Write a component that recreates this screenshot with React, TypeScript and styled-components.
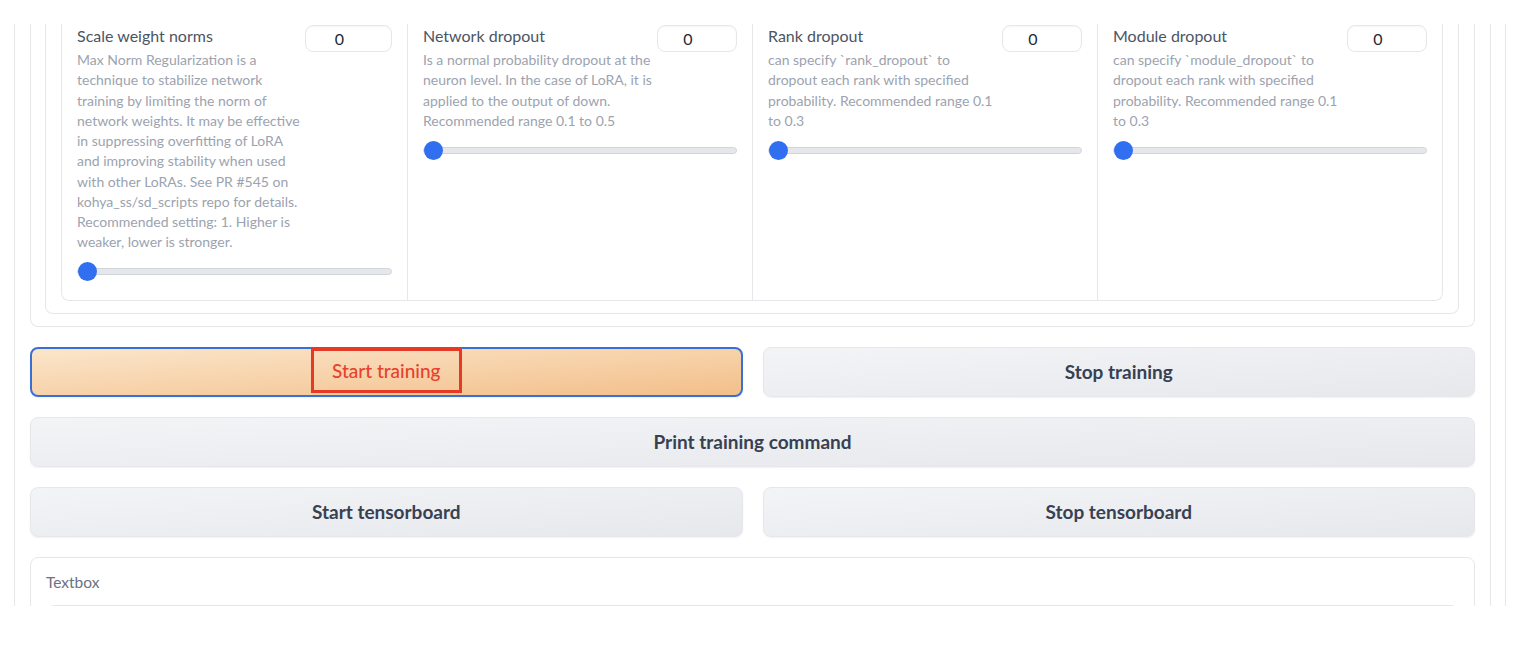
import styled, { createGlobalStyle } from 'styled-components';

const GlobalStyle = createGlobalStyle`
    body {
        margin: 0;
        background: #fff;
        font-family: Lato, "Liberation Sans", sans-serif;
    }
`

const Page = styled.div`
    padding: 24px 0 0 14px;
`

const Frame = styled.div`
    width: 1490px;
    height: 582px;
    overflow: hidden;
    border-left: 1px solid #e5e7eb;
    border-right: 1px solid #e5e7eb;
`

const Panel = styled.div`
    width: 1445px;
    min-height: 100%;
    padding: 0 15px;
    border-right: 1px solid #e5e7eb;
    display: flex;
    flex-direction: column;
    gap: 20px;
`

const OpenCard = styled.div<{ $pad: string }>`
    border: 1px solid #e5e7eb;
    border-top: none;
    border-radius: 0 0 8px 8px;
    padding: ${p => p.$pad};
    background: #fff;
`

const ParamGrid = styled.div`
    display: grid;
    grid-template-columns: repeat(4, 1fr);
    border: 1px solid #e5e7eb;
    border-top: none;
    border-radius: 0 0 8px 8px;
`

const Column = styled.div<{ $first?: boolean }>`
    padding: 1px 15px 18px;
    border-left: ${p => (p.$first ? 'none' : '1px solid #e5e7eb')};
    display: flex;
    flex-direction: column;
`

const HeaderRow = styled.div`
    display: flex;
    align-items: flex-start;
    gap: 5px;
`

const LabelBlock = styled.div`
    flex: 1;
    min-width: 0;
`

const Title = styled.div`
    font-size: 16px;
    line-height: 22px;
    color: #4b5563;
`

const Info = styled.div`
    margin-top: 3px;
    font-size: 14px;
    line-height: 20.25px;
    color: #9ca3af;
`

const NumberBox = styled.input<{ $w: number }>`
    flex: none;
    box-sizing: border-box;
    width: ${p => p.$w}px;
    height: 27px;
    border: 1px solid #e5e7eb;
    border-radius: 8px;
    box-shadow: inset 0 1px 2px rgba(0, 0, 0, 0.04);
    padding: 0 18px 0 0;
    text-align: center;
    font-family: inherit;
    font-size: 16px;
    color: #1f2937;
    background: #fff;
    outline: none;
    -moz-appearance: textfield;
    &::-webkit-inner-spin-button,
    &::-webkit-outer-spin-button {
        -webkit-appearance: none;
        margin: 0;
    }
`

const Slider = styled.input`
    -webkit-appearance: none;
    appearance: none;
    display: block;
    width: 100%;
    height: 20px;
    margin: 9px 0 0;
    background: transparent;
    &::-webkit-slider-runnable-track {
        height: 7px;
        border-radius: 4px;
        background: #e5e7eb;
        border: 1px solid #d1d5db;
    }
    &::-webkit-slider-thumb {
        -webkit-appearance: none;
        width: 19px;
        height: 19px;
        margin-top: -7px;
        border-radius: 50%;
        background: #2f6ff0;
        border: none;
    }
`

const ButtonRow = styled.div<{ $cols: number }>`
    display: grid;
    grid-template-columns: repeat(${p => p.$cols}, 1fr);
    gap: 20px;
`

const Button = styled.button<{ $primary?: boolean }>`
    height: 50px;
    display: flex;
    align-items: center;
    justify-content: center;
    border-radius: 8px;
    font-family: inherit;
    font-size: 19px;
    cursor: pointer;
    border: ${p => (p.$primary ? '2px solid #3a6fd8' : '1px solid #e5e7eb')};
    background: ${p =>
        p.$primary
            ? 'linear-gradient(to bottom right, #fbe6cb, #f3bf8a)'
            : 'linear-gradient(to bottom right, #f3f4f6, #e6e8ec)'};
    color: ${p => (p.$primary ? '#e8412c' : '#374151')};
    font-weight: ${p => (p.$primary ? 500 : 700)};
    box-shadow: 0 1px 2px rgba(0, 0, 0, 0.06);
`

const Marked = styled.span`
    border: 3px solid #e53a24;
    padding: 0 18px;
    line-height: 39px;
    margin-top: -3px;
`

const TextboxCard = styled.div`
    border: 1px solid #e5e7eb;
    border-radius: 8px;
    padding: 14px 15px 16px;
`

const FieldLabel = styled.div`
    font-size: 15.5px;
    line-height: 20px;
    color: #6b7280;
    margin-bottom: 13px;
`

const TextArea = styled.div`
    height: 40px;
    border: 1px solid #e5e7eb;
    border-radius: 8px;
    box-shadow: inset 0 1px 2px rgba(0, 0, 0, 0.04);
`

const params = [
    {
        title: 'Scale weight norms',
        info: 'Max Norm Regularization is a technique to stabilize network training by limiting the norm of network weights. It may be effective in suppressing overfitting of LoRA and improving stability when used with other LoRAs. See PR #545 on kohya_ss/sd_scripts repo for details. Recommended setting: 1. Higher is weaker, lower is stronger.',
        width: 87,
    },
    {
        title: 'Network dropout',
        info: 'Is a normal probability dropout at the neuron level. In the case of LoRA, it is applied to the output of down. Recommended range 0.1 to 0.5',
        width: 80,
    },
    {
        title: 'Rank dropout',
        info: 'can specify `rank_dropout` to dropout each rank with specified probability. Recommended range 0.1 to 0.3',
        width: 80,
    },
    {
        title: 'Module dropout',
        info: 'can specify `module_dropout` to dropout each rank with specified probability. Recommended range 0.1 to 0.3',
        width: 80,
    },
]

const App = () => {
    return (
        <Page>
            <GlobalStyle />
            <Frame>
                <Panel>
                    <OpenCard $pad="0 15px 12px 14px">
                        <OpenCard $pad="0 15px 12px 15px">
                            <ParamGrid>
                                {params.map((p, i) => (
                                    <Column key={p.title} $first={i === 0}>
                                        <HeaderRow>
                                            <LabelBlock>
                                                <Title>{p.title}</Title>
                                                <Info>{p.info}</Info>
                                            </LabelBlock>
                                            <NumberBox type="number" defaultValue={0} $w={p.width} />
                                        </HeaderRow>
                                        <Slider type="range" min={0} max={1} step={0.01} defaultValue={0} />
                                    </Column>
                                ))}
                            </ParamGrid>
                        </OpenCard>
                    </OpenCard>
                    <ButtonRow $cols={2}>
                        <Button $primary>
                            <Marked>Start training</Marked>
                        </Button>
                        <Button>Stop training</Button>
                    </ButtonRow>
                    <ButtonRow $cols={1}>
                        <Button>Print training command</Button>
                    </ButtonRow>
                    <ButtonRow $cols={2}>
                        <Button>Start tensorboard</Button>
                        <Button>Stop tensorboard</Button>
                    </ButtonRow>
                    <TextboxCard>
                        <FieldLabel>Textbox</FieldLabel>
                        <TextArea />
                    </TextboxCard>
                </Panel>
            </Frame>
        </Page>
    )
}

export default App;
